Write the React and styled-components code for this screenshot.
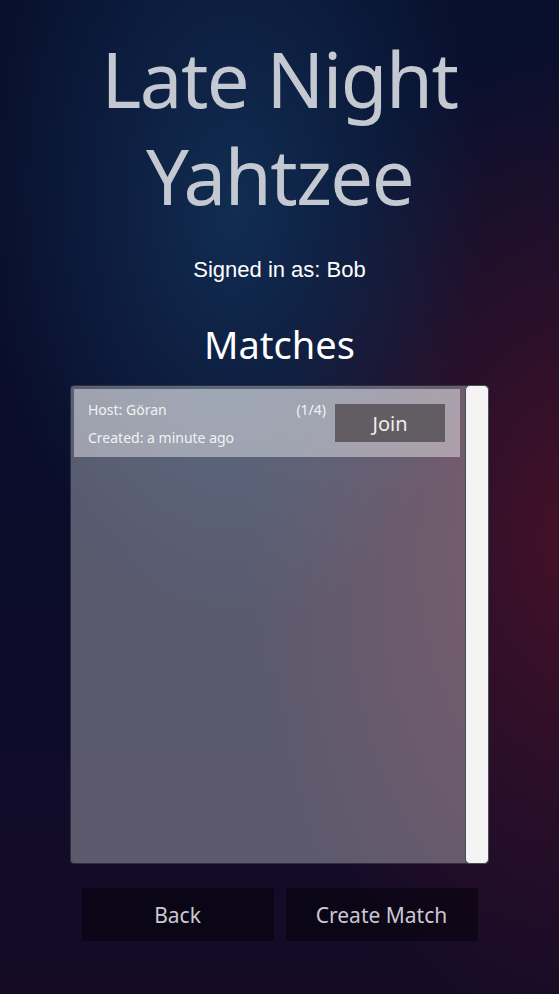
import React from "react";
import styled, { createGlobalStyle } from "styled-components";

const GlobalStyle = createGlobalStyle`
  html, body {
    margin: 0;
    padding: 0;
    background: #0a0d2a;
  }
  * {
    box-sizing: border-box;
  }
`;

const matches = [
  { id: 1, host: "Göran", created: "a minute ago", players: "(1/4)" },
];

function App() {
  return (
    <>
      <GlobalStyle />
      <Page>
        <Title>
          Late Night
          <br />
          Yahtzee
        </Title>
        <SignedIn>Signed in as: Bob</SignedIn>
        <Heading>Matches</Heading>
        <Panel>
          <List>
            {matches.map((m) => (
              <MatchRow key={m.id}>
                <MatchInfo>
                  <InfoLine>Host: {m.host}</InfoLine>
                  <InfoLine>Created: {m.created}</InfoLine>
                </MatchInfo>
                <Players>{m.players}</Players>
                <JoinButton>Join</JoinButton>
              </MatchRow>
            ))}
          </List>
          <Scrollbar />
        </Panel>
        <Actions>
          <ActionButton>Back</ActionButton>
          <ActionButton>Create Match</ActionButton>
        </Actions>
      </Page>
    </>
  );
}

export default App;

const Page = styled.div`
  width: 559px;
  height: 994px;
  overflow: hidden;
  display: flex;
  flex-direction: column;
  align-items: center;
  font-family: "Noto Sans", sans-serif;
  background:
    radial-gradient(ellipse 250px 420px at 235px 210px, rgba(20, 55, 95, 0.75), rgba(20, 55, 95, 0) 100%),
    radial-gradient(ellipse 340px 500px at 580px 540px, rgba(80, 18, 40, 0.85), rgba(80, 18, 40, 0) 100%),
    linear-gradient(180deg, #08102e 0%, #0a0c2a 55%, #150b27 100%);
`;

const Title = styled.h1`
  margin: 30px 0 0;
  font-size: 76px;
  letter-spacing: -1.5px;
  font-weight: 400;
  line-height: 97px;
  color: #c4c8d1;
  text-align: center;
`;

const SignedIn = styled.div`
  margin-top: 33px;
  font-family: "Liberation Sans", Arial, sans-serif;
  font-size: 22px;
  color: #ffffff;
`;

const Heading = styled.h2`
  margin: 35px 0 0;
  font-size: 38px;
  font-weight: 400;
  line-height: 52px;
  color: #ffffff;
`;

const Panel = styled.div`
  margin-top: 15px;
  width: 419px;
  height: 479px;
  display: flex;
  gap: 5px;
  padding: 3px 0 0 3px;
  background: rgba(255, 255, 255, 0.32);
  border: 1px solid rgba(40, 42, 56, 0.9);
  border-radius: 4px;
`;

const List = styled.div`
  flex: 1;
  display: flex;
  flex-direction: column;
`;

const MatchRow = styled.div`
  height: 68px;
  display: flex;
  align-items: center;
  padding: 0 15px 0 14px;
  background: rgba(255, 255, 255, 0.42);
`;

const MatchInfo = styled.div`
  flex: 1;
  display: flex;
  flex-direction: column;
  gap: 7px;
`;

const InfoLine = styled.div`
  font-size: 14px;
  line-height: 21px;
  color: #f2f2f4;
`;

const Players = styled.div`
  align-self: flex-start;
  margin-top: 10px;
  margin-right: 9px;
  font-size: 14px;
  line-height: 21px;
  color: #f2f2f4;
`;

const JoinButton = styled.button`
  width: 110px;
  height: 38px;
  border: none;
  background: #625d63;
  color: #eeeef0;
  font-family: "Noto Sans", sans-serif;
  font-size: 20px;
  padding: 0;
`;

const Scrollbar = styled.div`
  width: 24px;
  margin: -4px -1px -1px 0;
  background: #f4f4f4;
  border: 1px solid #4a4c58;
  border-radius: 5px;
`;

const Actions = styled.div`
  margin-top: 24px;
  display: flex;
  gap: 12px;
`;

const ActionButton = styled.button`
  width: 192px;
  height: 53px;
  border: none;
  background: rgba(0, 0, 0, 0.42);
  color: #c9c9d2;
  font-family: "Noto Sans", sans-serif;
  font-size: 21px;
  padding: 0;
`;
